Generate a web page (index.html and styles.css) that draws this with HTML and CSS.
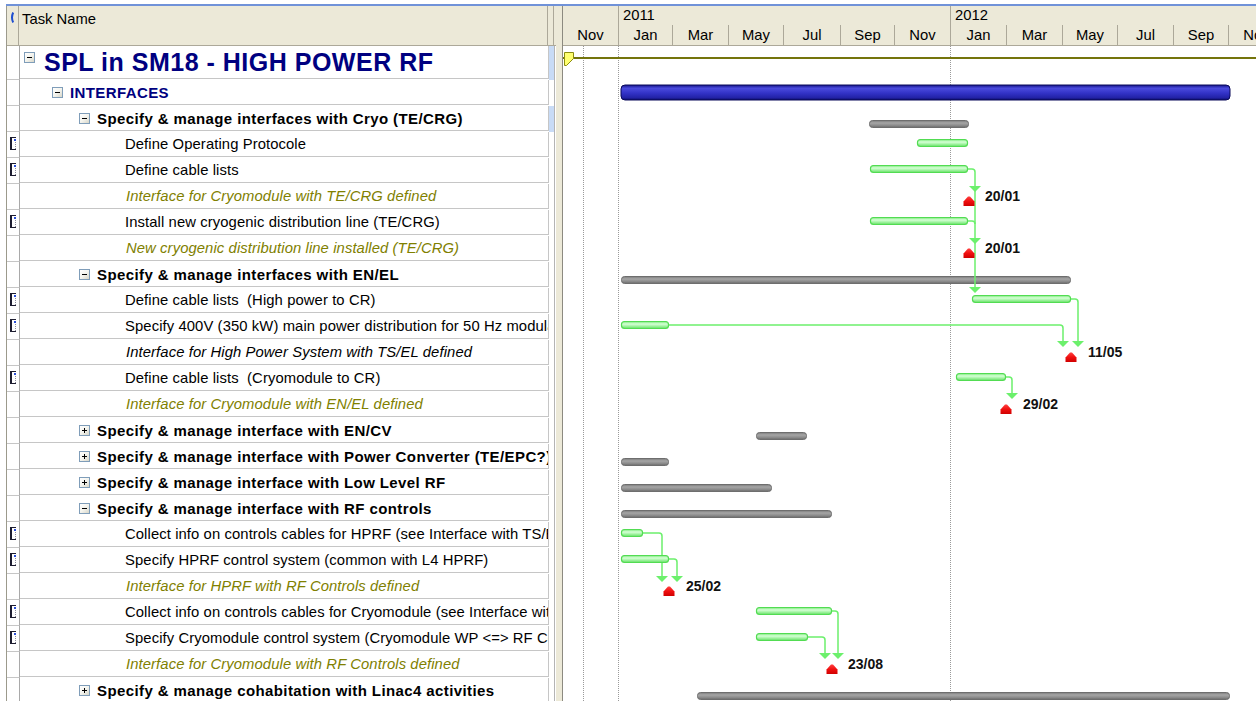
FILE: index.html
```html
<!DOCTYPE html>
<html lang="en">
<head>
<meta charset="utf-8">
<title>SPL in SM18 - HIGH POWER RF</title>
<link rel="stylesheet" href="styles.css">
</head>
<body>
<div class="app">
  <div class="frame">
    <section class="table">
      <div class="thead">
        <div class="h-ind">
          <svg width="4" height="11" viewBox="0 0 4 11"><path d="M3.2 0.5 Q0.8 5.5 3.2 10.5" fill="none" stroke="#1f4fd0" stroke-width="2"/></svg>
        </div>
        <div class="h-name">Task Name</div>
        <div class="h-sl"></div>
      </div>
      <div class="tbody">
        <div class="row row-title">
          <div class="ind"></div>
          <div class="name lv0"><span class="tog minus top"></span><span class="title">SPL in SM18 - HIGH POWER RF</span></div>
          <div class="sl sel"></div>
        </div>
        <div class="row">
          <div class="ind"></div>
          <div class="name lv1"><span class="tog minus"></span><span class="sum navy">INTERFACES</span></div>
          <div class="sl"></div>
        </div>
        <div class="row">
          <div class="ind"></div>
          <div class="name lv2"><span class="tog minus"></span><span class="sum">Specify &amp; manage interfaces with Cryo (TE/CRG)</span></div>
          <div class="sl sel"></div>
        </div>
        <div class="row">
          <div class="ind"><i class="note"></i></div>
          <div class="name lv3">Define Operating Protocole</div>
          <div class="sl"></div>
        </div>
        <div class="row">
          <div class="ind"><i class="note"></i></div>
          <div class="name lv3">Define cable lists</div>
          <div class="sl"></div>
        </div>
        <div class="row">
          <div class="ind"></div>
          <div class="name lv3 ms">Interface for Cryomodule with TE/CRG defined</div>
          <div class="sl"></div>
        </div>
        <div class="row">
          <div class="ind"><i class="note"></i></div>
          <div class="name lv3">Install new cryogenic distribution line (TE/CRG)</div>
          <div class="sl"></div>
        </div>
        <div class="row">
          <div class="ind"></div>
          <div class="name lv3 ms">New cryogenic distribution line installed (TE/CRG)</div>
          <div class="sl"></div>
        </div>
        <div class="row">
          <div class="ind"></div>
          <div class="name lv2"><span class="tog minus"></span><span class="sum">Specify &amp; manage interfaces with EN/EL</span></div>
          <div class="sl"></div>
        </div>
        <div class="row">
          <div class="ind"><i class="note"></i></div>
          <div class="name lv3">Define cable lists&nbsp; (High power to CR)</div>
          <div class="sl"></div>
        </div>
        <div class="row">
          <div class="ind"><i class="note"></i></div>
          <div class="name lv3">Specify 400V (350 kW) main power distribution for 50 Hz modulators</div>
          <div class="sl"></div>
        </div>
        <div class="row">
          <div class="ind"></div>
          <div class="name lv3 ms crit">Interface for High Power System with TS/EL defined</div>
          <div class="sl"></div>
        </div>
        <div class="row">
          <div class="ind"><i class="note"></i></div>
          <div class="name lv3">Define cable lists&nbsp; (Cryomodule to CR)</div>
          <div class="sl"></div>
        </div>
        <div class="row">
          <div class="ind"></div>
          <div class="name lv3 ms">Interface for Cryomodule with EN/EL defined</div>
          <div class="sl"></div>
        </div>
        <div class="row">
          <div class="ind"></div>
          <div class="name lv2"><span class="tog plus"></span><span class="sum">Specify &amp; manage interface with EN/CV</span></div>
          <div class="sl"></div>
        </div>
        <div class="row">
          <div class="ind"></div>
          <div class="name lv2"><span class="tog plus"></span><span class="sum">Specify &amp; manage interface with Power Converter (TE/EPC?)</span></div>
          <div class="sl"></div>
        </div>
        <div class="row">
          <div class="ind"></div>
          <div class="name lv2"><span class="tog plus"></span><span class="sum">Specify &amp; manage interface with Low Level RF</span></div>
          <div class="sl"></div>
        </div>
        <div class="row">
          <div class="ind"></div>
          <div class="name lv2"><span class="tog minus"></span><span class="sum">Specify &amp; manage interface with RF controls</span></div>
          <div class="sl"></div>
        </div>
        <div class="row">
          <div class="ind"><i class="note"></i></div>
          <div class="name lv3">Collect info on controls cables for HPRF (see Interface with TS/EL)</div>
          <div class="sl"></div>
        </div>
        <div class="row">
          <div class="ind"><i class="note"></i></div>
          <div class="name lv3">Specify HPRF control system (common with L4 HPRF)</div>
          <div class="sl"></div>
        </div>
        <div class="row">
          <div class="ind"></div>
          <div class="name lv3 ms">Interface for HPRF with RF Controls defined</div>
          <div class="sl"></div>
        </div>
        <div class="row">
          <div class="ind"><i class="note"></i></div>
          <div class="name lv3">Collect info on controls cables for Cryomodule (see Interface with TS/EL)</div>
          <div class="sl"></div>
        </div>
        <div class="row">
          <div class="ind"><i class="note"></i></div>
          <div class="name lv3">Specify Cryomodule control system (Cryomodule WP &lt;=&gt; RF Controls)</div>
          <div class="sl"></div>
        </div>
        <div class="row">
          <div class="ind"></div>
          <div class="name lv3 ms">Interface for Cryomodule with RF Controls defined</div>
          <div class="sl"></div>
        </div>
        <div class="row">
          <div class="ind"></div>
          <div class="name lv2"><span class="tog plus"></span><span class="sum">Specify &amp; manage cohabitation with Linac4 activities</span></div>
          <div class="sl"></div>
        </div>
      </div>
    </section>

    <div class="splitter"></div>

    <section class="gantt">
      <div class="ghead">
        <div class="years">
          <div class="yr"></div>
          <div class="yr">2011</div>
          <div class="yr">2012</div>
        </div>
        <div class="months">
          <div class="mo">Nov</div>
          <div class="mo">Jan</div>
          <div class="mo">Mar</div>
          <div class="mo">May</div>
          <div class="mo">Jul</div>
          <div class="mo">Sep</div>
          <div class="mo">Nov</div>
          <div class="mo">Jan</div>
          <div class="mo">Mar</div>
          <div class="mo">May</div>
          <div class="mo">Jul</div>
          <div class="mo">Sep</div>
          <div class="mo">Nov</div>
        </div>
      </div>
      <div class="gbody">
        <svg class="chart" width="693" height="655" viewBox="563 46 693 655">
          <defs>
            <linearGradient id="gBlue" x1="0" y1="0" x2="0" y2="1">
              <stop offset="0" stop-color="#14148a"/>
              <stop offset="0.22" stop-color="#4a4adc"/>
              <stop offset="0.55" stop-color="#3232c6"/>
              <stop offset="0.85" stop-color="#2222a6"/>
              <stop offset="1" stop-color="#0c0c66"/>
            </linearGradient>
            <linearGradient id="gGray" x1="0" y1="0" x2="0" y2="1">
              <stop offset="0" stop-color="#7a7a7a"/>
              <stop offset="0.35" stop-color="#a6a6a6"/>
              <stop offset="0.7" stop-color="#8c8c8c"/>
              <stop offset="1" stop-color="#6a6a6a"/>
            </linearGradient>
            <linearGradient id="gGreen" x1="0" y1="0" x2="0" y2="1">
              <stop offset="0" stop-color="#78e878"/>
              <stop offset="0.35" stop-color="#d6ffd6"/>
              <stop offset="0.65" stop-color="#a4f4a4"/>
              <stop offset="1" stop-color="#62de62"/>
            </linearGradient>
            <linearGradient id="gRed" x1="0" y1="0" x2="0" y2="1">
              <stop offset="0" stop-color="#ff4040"/>
              <stop offset="0.5" stop-color="#f01010"/>
              <stop offset="1" stop-color="#d00000"/>
            </linearGradient>
          </defs>

          <!-- gridlines: status date and year starts -->
          <g class="grid" stroke="#9a9a9a" stroke-width="1" stroke-dasharray="1 1">
            <line x1="583.5" y1="46" x2="583.5" y2="701"/>
            <line x1="618.5" y1="46" x2="618.5" y2="701"/>
            <line x1="950.5" y1="46" x2="950.5" y2="701"/>
          </g>

          <!-- project summary line -->
          <rect x="563" y="57" width="693" height="2" fill="#74740c"/>
          <polygon points="564.5,52.5 573.5,52.5 573.5,58.5 566.5,65.5 564.5,65.5" fill="#ffff70" stroke="#8c8c10" stroke-width="1"/>

          <!-- INTERFACES summary -->
          <rect x="621" y="85" width="609" height="15" rx="4" fill="url(#gBlue)" stroke="#0a0a5a" stroke-width="1"/>

          <!-- group summaries -->
          <g fill="url(#gGray)" stroke="#6e6e6e" stroke-width="1">
            <rect x="869.5" y="120.5" width="99" height="7" rx="3"/>
            <rect x="621.5" y="276.5" width="449" height="7" rx="3"/>
            <rect x="756.5" y="432.5" width="50" height="7" rx="3"/>
            <rect x="621.5" y="458.5" width="47" height="7" rx="3"/>
            <rect x="621.5" y="484.5" width="150" height="7" rx="3"/>
            <rect x="621.5" y="510.5" width="210" height="7" rx="3"/>
            <rect x="697.5" y="692.5" width="532" height="7" rx="3"/>
          </g>

          <!-- dependency links -->
          <g fill="none" stroke="#6cf06c" stroke-width="1.5">
            <path d="M968 169 H972 Q975 169 975 172 V290"/>
            <path d="M968 221 H972 Q975 221 975 224"/>
            <path d="M1071 299 H1075 Q1078 299 1078 302 V344"/>
            <path d="M669 325 H1060 Q1063 325 1063 328 V344"/>
            <path d="M1006 377 H1009 Q1012 377 1012 380 V396"/>
            <path d="M643 533 H659 Q662 533 662 536 V579"/>
            <path d="M669 559 H674 Q677 559 677 562 V579"/>
            <path d="M832 611 H835 Q838 611 838 614 V656"/>
            <path d="M808 637 H822 Q825 637 825 640 V656"/>
          </g>
          <g fill="#6cf06c">
            <polygon points="969,186 981,186 975,192"/>
            <polygon points="969,238 981,238 975,244"/>
            <polygon points="969,287 981,287 975,293"/>
            <polygon points="1072,341 1084,341 1078,347"/>
            <polygon points="1057,341 1069,341 1063,347"/>
            <polygon points="1006,393 1018,393 1012,399"/>
            <polygon points="656,576 668,576 662,582"/>
            <polygon points="671,576 683,576 677,582"/>
            <polygon points="832,653 844,653 838,659"/>
            <polygon points="819,653 831,653 825,659"/>
          </g>

          <!-- tasks -->
          <g fill="url(#gGreen)" stroke="#52dc52" stroke-width="1.2">
            <rect x="917.5" y="139.5" width="50" height="7" rx="3"/>
            <rect x="870.5" y="165.5" width="97" height="7" rx="3"/>
            <rect x="870.5" y="217.5" width="97" height="7" rx="3"/>
            <rect x="972.5" y="295.5" width="98" height="7" rx="3"/>
            <rect x="621.5" y="321.5" width="47" height="7" rx="3"/>
            <rect x="956.5" y="373.5" width="49" height="7" rx="3"/>
            <rect x="621.5" y="529.5" width="21" height="7" rx="3"/>
            <rect x="621.5" y="555.5" width="47" height="7" rx="3"/>
            <rect x="756.5" y="607.5" width="75" height="7" rx="3"/>
            <rect x="756.5" y="633.5" width="51" height="7" rx="3"/>
          </g>

          <!-- milestones -->
          <g fill="url(#gRed)">
            <polygon points="963.5,206 963.5,201.5 968,196.5 970,196.5 974.5,201.5 974.5,206"/>
            <polygon points="963.5,258 963.5,253.5 968,248.5 970,248.5 974.5,253.5 974.5,258"/>
            <polygon points="1065.5,362 1065.5,357.5 1070,352.5 1072,352.5 1076.5,357.5 1076.5,362"/>
            <polygon points="1000.5,414 1000.5,409.5 1005,404.5 1007,404.5 1011.5,409.5 1011.5,414"/>
            <polygon points="663.5,596 663.5,591.5 668,586.5 670,586.5 674.5,591.5 674.5,596"/>
            <polygon points="826.5,674 826.5,669.5 831,664.5 833,664.5 837.5,669.5 837.5,674"/>
          </g>
          <g class="mslabel">
            <text x="985" y="201">20/01</text>
            <text x="985" y="253">20/01</text>
            <text x="1088" y="357">11/05</text>
            <text x="1023" y="409">29/02</text>
            <text x="686" y="591">25/02</text>
            <text x="848" y="669">23/08</text>
          </g>
        </svg>
      </div>
    </section>
  </div>
</div>
</body>
</html>
```

FILE: styles.css
```css
html, body {
  margin: 0;
  padding: 0;
  background: #fff;
}

body {
  font-family: "Liberation Sans", Arial, sans-serif;
  font-size: 14.8px;
  color: #000;
  width: 1256px;
  height: 701px;
  overflow: hidden;
}

.app {
  padding-top: 4px;
  height: 697px;
}

.frame {
  display: flex;
  margin-left: 6px;
  border-top: 2px solid #7092d8;
  height: 695px;
  overflow: hidden;
}

/* ---------- task sheet ---------- */
.table {
  flex: none;
  width: 549px;
  border-left: 1px solid #9c9a8c;
  display: flex;
  flex-direction: column;
}

.thead {
  display: flex;
  height: 39px;
  background: #ece9d8;
  border-bottom: 1px solid #aca899;
}

.h-ind {
  width: 12px;
  border-right: 1px solid #aca899;
  display: flex;
  justify-content: flex-end;
  padding-top: 6px;
  box-sizing: border-box;
  padding-right: 4px;
}

.h-ind svg {
  display: block;
}

.h-name {
  width: 529px;
  border-right: 1px solid #aca899;
  padding: 4px 0 0 3px;
  box-sizing: border-box;
  line-height: 18px;
  white-space: nowrap;
}

.h-sl {
  width: 5px;
  border-right: 1px solid #aca899;
}

.tbody {
  flex: 1;
  overflow: hidden;
}

.row {
  display: flex;
  height: 26px;
}

.row-title {
  height: 34px;
}

.ind {
  flex: none;
  width: 12px;
  border-right: 1px solid #a9a9a9;
  border-bottom: 1px solid #c6c6c6;
  height: calc(100% - 1px);
  display: flex;
  align-items: flex-start;
}

.name {
  flex: none;
  width: 529px;
  border-right: 1px solid #c6c6c6;
  border-bottom: 1px solid #c6c6c6;
  height: calc(100% - 1px);
  line-height: 25px;
  letter-spacing: 0.1px;
  white-space: nowrap;
  overflow: hidden;
  display: flex;
  align-items: center;
  box-sizing: border-box;
}

.sl {
  flex: none;
  width: 5px;
  border-right: 1px solid #b4b4b4;
}

.sl.sel {
  background: #c8dbf6;
}

/* outline levels */
.lv0 { padding-left: 4px; align-items: flex-start; }
.lv1 { padding-left: 32px; }
.lv2 { padding-left: 59px; }
.lv3 { padding-left: 105px; }

.title {
  font-size: 25px;
  font-weight: bold;
  letter-spacing: 0.5px;
  color: #000080;
  line-height: 33px;
  margin-left: 9px;
}

.sum {
  font-weight: bold;
  font-size: 15px;
  letter-spacing: 0.4px;
  margin-left: 7px;
}

.navy {
  color: #000080;
}

.ms {
  font-style: italic;
  color: #808000;
  padding-left: 106px;
}

.ms.crit {
  color: #000;
}

/* expand / collapse toggles */
.tog {
  flex: none;
  position: relative;
  width: 9px;
  height: 9px;
  border: 1px solid #7f9db9;
  background: linear-gradient(135deg, #ffffff 0%, #f4f4ee 50%, #d8d6c8 100%);
}

.tog.top {
  margin-top: 6px;
}

.tog::before,
.tog::after {
  content: "";
  position: absolute;
  background: #000;
}

.tog::before {
  left: 2px;
  top: 4px;
  width: 5px;
  height: 1px;
}

.tog.plus::after {
  left: 4px;
  top: 2px;
  width: 1px;
  height: 5px;
}

/* note indicator */
.note {
  display: block;
  position: relative;
  width: 6px;
  height: 13px;
  margin: 5px 0 0 3px;
  border-left: 2px solid #1c1c30;
  border-top: 1px solid #1c1c30;
  border-bottom: 1px solid #1c1c30;
  box-sizing: border-box;
}

.note::before {
  content: "";
  position: absolute;
  right: 0;
  top: 1px;
  width: 2px;
  height: 2px;
  background: #2a4ed8;
}

.note::after {
  content: "";
  position: absolute;
  right: 0;
  top: 4px;
  width: 1px;
  height: 7px;
  background: repeating-linear-gradient(#8a8a9a 0 1px, transparent 1px 2px);
}

/* ---------- splitter ---------- */
.splitter {
  flex: none;
  width: 6px;
  background: #ece9d8;
  border-right: 1px solid #8c8a80;
}

/* ---------- gantt ---------- */
.gantt {
  flex: 1;
  min-width: 0;
  display: flex;
  flex-direction: column;
  overflow: hidden;
}

.ghead {
  height: 39px;
  background: #ece9d8;
  border-bottom: 1px solid #aca899;
  white-space: nowrap;
}

.years {
  display: grid;
  grid-template-columns: 55px 332px 400px;
  height: 19px;
}

.yr {
  line-height: 19px;
  padding-left: 4px;
}

.yr + .yr {
  border-left: 1px solid #aca899;
}

.months {
  display: grid;
  grid-template-columns: 55px 54px 56px 55px 57px 54px 56px 56px 56px 55px 56px 55px 56px;
  height: 20px;
}

.mo {
  line-height: 20px;
  text-align: center;
}

.mo + .mo {
  border-left: 1px solid #aca899;
}

.gbody {
  flex: 1;
  background: #fff;
  overflow: hidden;
}

.chart {
  display: block;
}

.mslabel text {
  font-family: "Liberation Sans", Arial, sans-serif;
  font-weight: bold;
  font-size: 14px;
  fill: #111;
}
```
